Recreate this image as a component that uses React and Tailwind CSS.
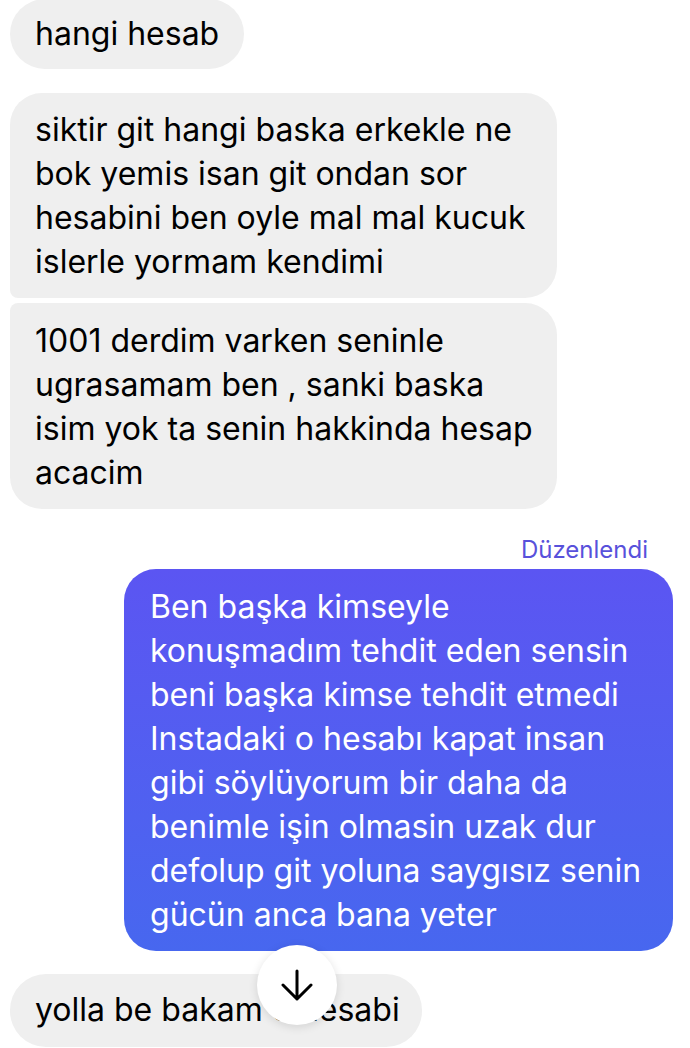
const font = { fontFamily: 'Inter, "Noto Sans", sans-serif' };

function Incoming({ children, className = "" }) {
  return (
    <div
      className={`bg-[#efefef] text-black text-[32px] leading-[44px] px-[25px] whitespace-nowrap ${className}`}
    >
      {children}
    </div>
  );
}

export default function App() {
  return (
    <div
      className="relative w-[690px] h-[1048px] overflow-hidden bg-white px-[10px]"
      style={font}
    >
      {/* hangi hesab */}
      <Incoming className="w-fit h-[70px] -mt-[1px] py-[13px] rounded-[35px]">
        hangi hesab
      </Incoming>

      {/* grouped incoming */}
      <div className="mt-[24px] flex flex-col gap-[5px]">
        <Incoming className="w-[547px] pt-[15px] pb-[14px] rounded-[32px] rounded-bl-[8px]">
          siktir git hangi baska erkekle ne
          <br />
          bok yemis isan git ondan sor
          <br />
          hesabini ben oyle mal mal kucuk
          <br />
          islerle yormam kendimi
        </Incoming>
        <Incoming className="w-[547px] pt-[16px] pb-[14px] rounded-[32px] rounded-tl-[8px]">
          1001 derdim varken seninle
          <br />
          ugrasamam ben , sanki baska
          <br />
          isim yok ta senin hakkinda hesap
          <br />
          acacim
        </Incoming>
      </div>

      {/* edited label */}
      <div className="mt-[29px] pr-[32px] text-right text-[24px] leading-[24px] text-[#5851db]">
        Düzenlendi
      </div>

      {/* outgoing */}
      <div className="flex justify-end mt-[7px] pr-[7px]">
        <div className="w-[549px] pl-[26px] pr-[10px] pt-[16px] pb-[14px] rounded-[32px] bg-gradient-to-b from-[#5b55f2] to-[#4767ef] text-white text-[32px] leading-[44px] whitespace-nowrap">
          Ben başka kimseyle
          <br />
          konuşmadım tehdit eden sensin
          <br />
          beni başka kimse tehdit etmedi
          <br />
          Instadaki o hesabı kapat insan
          <br />
          gibi söylüyorum bir daha da
          <br />
          benimle işin olmasin uzak dur
          <br />
          defolup git yoluna saygısız senin
          <br />
          gücün anca bana yeter
        </div>
      </div>

      {/* last incoming */}
      <Incoming className="mt-[23px] w-fit h-[73px] py-[14px] pr-[22px] rounded-[36px]">
        yolla be bakam o hesabi
      </Incoming>

      {/* scroll-to-bottom button */}
      <div className="absolute left-[257px] top-[945px] w-[80px] h-[80px] rounded-full bg-white shadow-[0_2px_10px_rgba(0,0,0,0.12)] flex items-center justify-center">
        <svg width="32" height="34" viewBox="0 0 32 34" fill="none">
          <path
            d="M16 3V31M2 17L16 31L30 17"
            stroke="#000"
            strokeWidth="3"
            strokeLinecap="round"
            strokeLinejoin="round"
          />
        </svg>
      </div>
    </div>
  );
}
